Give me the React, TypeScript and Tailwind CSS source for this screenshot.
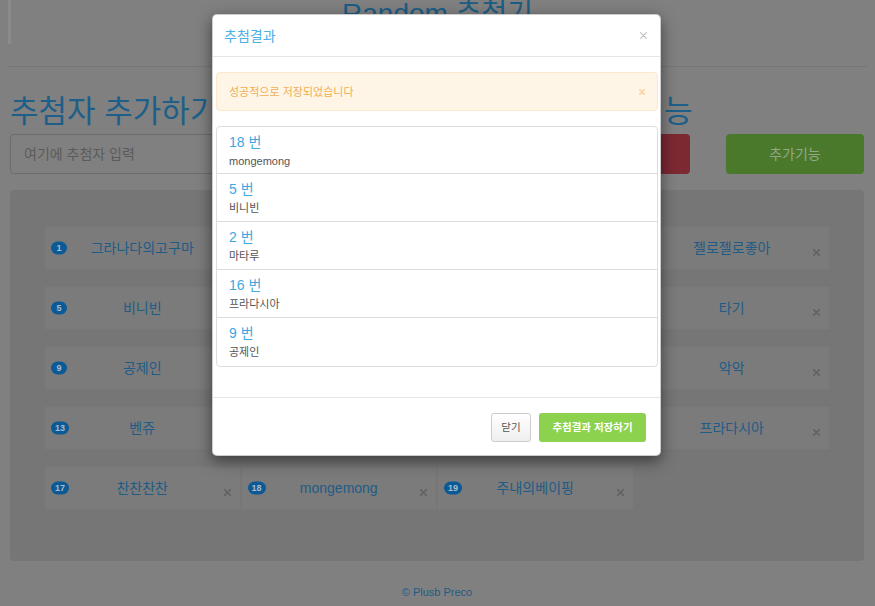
import React from "react";

type Entry = { n: number; name: string };

const entries: Entry[] = [
  { n: 1, name: "그라나다의고구마" },
  { n: 2, name: "마타루" },
  { n: 3, name: "코코몽" },
  { n: 4, name: "젤로젤로좋아" },
  { n: 5, name: "비니빈" },
  { n: 6, name: "하루하루" },
  { n: 7, name: "도토리" },
  { n: 8, name: "타기" },
  { n: 9, name: "공제인" },
  { n: 10, name: "뽀로로" },
  { n: 11, name: "라라랜드" },
  { n: 12, name: "악악" },
  { n: 13, name: "벤쥬" },
  { n: 14, name: "초코칩" },
  { n: 15, name: "민트맛" },
  { n: 16, name: "프라다시아" },
  { n: 17, name: "찬찬찬찬" },
  { n: 18, name: "mongemong" },
  { n: 19, name: "주내의베이핑" },
];

const results: Entry[] = [
  { n: 18, name: "mongemong" },
  { n: 5, name: "비니빈" },
  { n: 2, name: "마타루" },
  { n: 16, name: "프라다시아" },
  { n: 9, name: "공제인" },
];

function Cross({ size, width, className }: { size: number; width: number; className: string }) {
  return (
    <svg width={size} height={size} viewBox={`0 0 ${size} ${size}`} className={className} fill="none">
      <path
        d={`M0.6 0.6L${size - 0.6} ${size - 0.6}M${size - 0.6} 0.6L0.6 ${size - 0.6}`}
        stroke="currentColor"
        strokeWidth={width}
        strokeLinecap="round"
      />
    </svg>
  );
}

function Card({ e }: { e: Entry }) {
  return (
    <div className="relative flex h-[44px] items-center justify-center border border-[#777777] bg-[#7b7b7b]">
      <span className="absolute left-[6px] top-1/2 flex h-[13px] min-w-[16px] -translate-y-1/2 items-center justify-center rounded-full bg-[#0b5a96] px-[4px] text-[9px] font-bold leading-none text-[#a9bccd]">
        {e.n}
      </span>
      <span className="text-[14px] leading-[18px] text-[#1f5c86]">{e.name}</span>
      <Cross size={7} width={1.5} className="absolute right-[9px] top-[22px] text-[#626262]" />
    </div>
  );
}

export default function App() {
  return (
    <div className="relative h-[606px] w-full overflow-hidden bg-[#808080] [font-family:'Liberation_Sans','Noto_Sans_CJK_KR',sans-serif]">
      {/* Page under the backdrop */}
      <div className="ml-[8px] mr-[11px] h-[46px] border-l-[3px] border-[#8b8b8b]">
        <h2 className="-mt-[2px] text-center text-[28px] leading-[32px] text-[#1d5c84]">Random 추첨기</h2>
      </div>
      <div className="mx-[8px] mt-[22px] h-px bg-[#767676]" />

      <div className="ml-[10px] mr-[11px] mt-[27px]">
        <div className="grid grid-cols-2 gap-x-[20px]">
          <div>
            <h1 className="text-[31px] leading-[36px] text-[#1d5f88]">추첨자 추가하기</h1>
            <div className="mt-[4px] flex h-[40px] items-center rounded-[4px] border border-[#6c6c6c] pl-[13px] text-[14px] text-[#5b5b5b]">
              여기에 추첨자 입력
            </div>
          </div>
          <div>
            <h1 className="pl-[20px] text-[31px] leading-[36px] text-[#1d5f88]">추첨 및 추가 기능</h1>
            <div className="mt-[4px] flex h-[40px] gap-[36px]">
              <div className="flex flex-1 items-center justify-center rounded-[4px] bg-[#7c2932] text-[14px] text-[#a08a8c]">
                추첨하기
              </div>
              <div className="flex w-[138px] items-center justify-center rounded-[4px] bg-[#4a792b] text-[14px] text-[#94a889]">
                추가기능
              </div>
            </div>
          </div>
        </div>

        <div className="mt-[16px] grid grid-cols-4 gap-y-[16px] rounded-[4px] bg-[#767676] px-[34px] pb-[51px] pt-[36px]">
          {entries.map((e) => (
            <Card key={e.n} e={e} />
          ))}
        </div>

        <p className="mt-[24px] text-center text-[11px] leading-[14px] text-[#1f5c86]">© Plusb Preco</p>
      </div>

      {/* Modal */}
      <div className="absolute inset-0 flex items-start justify-center pr-[2px] pt-[14px]">
        <div className="flex w-[449px] flex-col rounded-[5px] border border-black/20 bg-white shadow-[0_5px_15px_rgba(0,0,0,0.5)]">
          <div className="flex h-[42px] items-center justify-between border-b border-[#e5e5e5] pl-[11px] pr-[13px]">
            <h3 className="text-[14px] leading-[18px] text-[#4cafe6]">추첨결과</h3>
            <Cross size={7} width={1.2} className="text-[#c2c2c2]" />
          </div>

          <div className="pb-[30px] pl-[3px] pr-[2px] pt-[15px]">
            <div className="flex h-[39px] items-center justify-between rounded-[4px] border border-[#fbe8cd] bg-[#fef5e7] pl-[12px] pr-[12px]">
              <span className="text-[11px] leading-[14px] text-[#f0ae55]">성공적으로 저장되었습니다</span>
              <Cross size={6} width={1.4} className="text-[#f7d4a3]" />
            </div>

            <div className="mt-[15px] divide-y divide-[#dddddd] rounded-[4px] border border-[#dddddd]">
              {results.map((r) => (
                <div key={r.n} className="h-[48px] px-[12px] pt-[6px] first:h-[47px]">
                  <div className="text-[14px] leading-[18px] text-[#3fa7e0]">{r.n} 번</div>
                  <div className="mt-[3px] text-[11px] leading-[14px] text-[#555555]">{r.name}</div>
                </div>
              ))}
            </div>
          </div>

          <div className="flex justify-end gap-[8px] border-t border-[#e5e5e5] pb-[13px] pr-[14px] pt-[15px]">
            <button className="h-[29px] w-[40px] rounded-[3px] border border-[#cccccc] bg-gradient-to-b from-white to-[#efefef] text-[10.5px] text-[#555555]">
              닫기
            </button>
            <button className="h-[29px] w-[107px] rounded-[3px] bg-[#8cd24f] text-[10.5px] font-bold text-white">
              추첨결과 저장하기
            </button>
          </div>
        </div>
      </div>
    </div>
  );
}
